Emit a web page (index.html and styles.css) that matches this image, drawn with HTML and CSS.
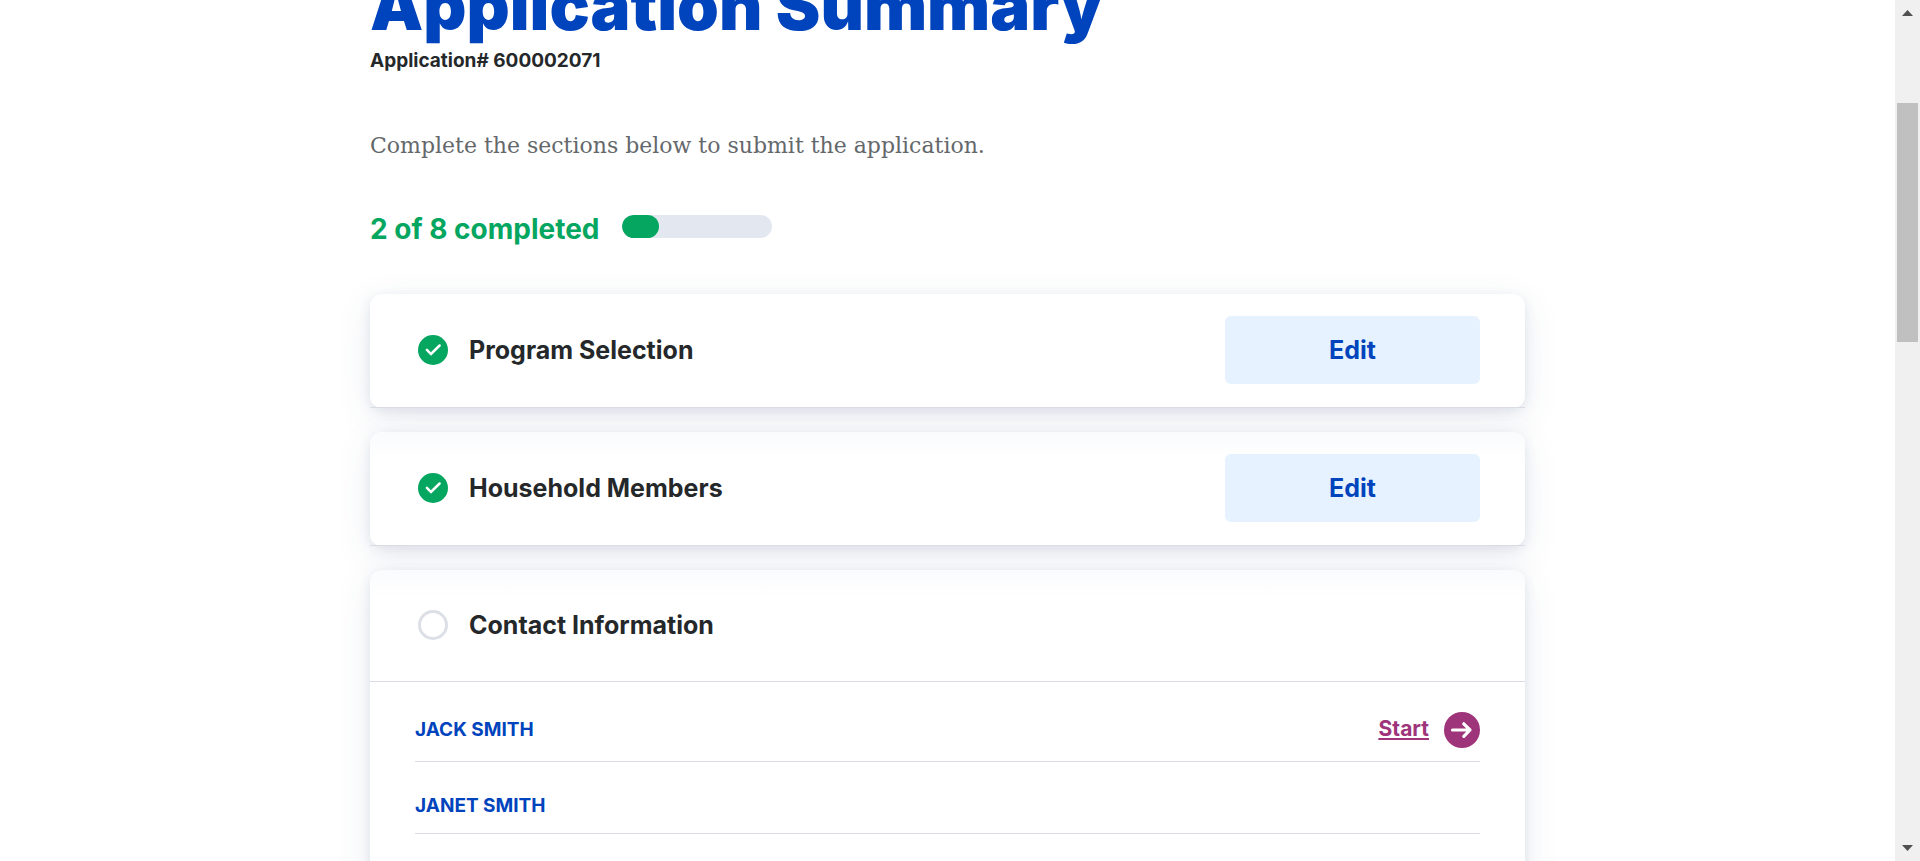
FILE: index.html
```html
<!DOCTYPE html>
<html lang="en">
<head>
<meta charset="utf-8">
<title>Application Summary</title>
<link rel="stylesheet" href="styles.css">
</head>
<body>
<div class="viewport">
  <main class="page">
    <div class="content">
      <h1 class="page-title">Application Summary</h1>
      <p class="app-number">Application# 600002071</p>
      <p class="intro">Complete the sections below to submit the application.</p>
      <div class="progress">
        <span class="progress-label" id="progress-label">2 of 8 completed</span>
        <div class="progress-track" role="progressbar" aria-labelledby="progress-label" aria-valuemin="0" aria-valuemax="8" aria-valuenow="2">
          <div class="progress-fill" style="width: 25%"></div>
        </div>
      </div>
      <div class="sections">
        <section class="card">
          <header class="card-header">
            <svg class="status" viewBox="0 0 30 30" aria-hidden="true"><circle cx="15" cy="15" r="15" fill="#05a660"/><path d="M8.900 14.800l4.100 4.200 8.600-8.500" fill="none" stroke="#fff" stroke-width="2.500" stroke-linecap="round" stroke-linejoin="miter"/></svg>
            <h2 class="card-title">Program Selection</h2>
            <button class="edit-button" type="button">Edit</button>
          </header>
        </section>
        <section class="card">
          <header class="card-header">
            <svg class="status" viewBox="0 0 30 30" aria-hidden="true"><circle cx="15" cy="15" r="15" fill="#05a660"/><path d="M8.900 14.800l4.100 4.200 8.600-8.500" fill="none" stroke="#fff" stroke-width="2.500" stroke-linecap="round" stroke-linejoin="miter"/></svg>
            <h2 class="card-title">Household Members</h2>
            <button class="edit-button" type="button">Edit</button>
          </header>
        </section>
        <section class="card">
          <header class="card-header card-header-plain">
            <svg class="status" viewBox="0 0 30 30" aria-hidden="true"><circle cx="15" cy="15" r="13.500" fill="#fff" stroke="#dcdfe6" stroke-width="3"/></svg>
            <h2 class="card-title">Contact Information</h2>
          </header>
          <ul class="people">
            <li class="person">
              <span class="person-name">JACK SMITH</span>
              <a class="start-link" href="#start">
                <span class="start-text">Start</span>
                <svg class="start-icon" viewBox="0 0 36 36" aria-hidden="true"><circle cx="18" cy="18" r="18" fill="#9e3479"/><path d="M8.500 18h17.500M19.800 11.800l6.200 6.200-6.200 6.400" fill="none" stroke="#fff" stroke-width="3.200" stroke-linecap="round" stroke-linejoin="round"/></svg>
              </a>
            </li>
            <li class="person">
              <span class="person-name">JANET SMITH</span>
            </li>
          </ul>
        </section>
      </div>
    </div>
  </main>
  <div class="scrollbar" aria-hidden="true">
    <svg class="scroll-arrow" viewBox="0 0 11 6"><path d="M0 6L5.500 0 11 6z" fill="#505050"/></svg>
    <div class="scroll-track"><div class="scroll-thumb"></div></div>
    <svg class="scroll-arrow" viewBox="0 0 11 6"><path d="M0 0L5.500 6 11 0z" fill="#505050"/></svg>
  </div>
</div>
</body>
</html>
```
FILE: styles.css
```css
* {
  box-sizing: border-box;
}

body {
  margin: 0;
  background: #fff;
  color: #25282a;
  font-family: Inter, "Open Sans", sans-serif;
}

h1, h2, p, ul {
  margin: 0;
  padding: 0;
}

.viewport {
  display: flex;
  height: 100vh;
  overflow: hidden;
}

.page {
  flex: 1;
  overflow: hidden;
}

.content {
  max-width: 1155px;
  margin: 0 auto;
}

/* The page is scrolled part of the way past its heading. */
.page-title {
  margin-top: -34px;
  color: #0044bd;
  font-size: 67px;
  font-weight: 900;
  line-height: 80px;
}

.app-number {
  font-size: 19px;
  font-weight: 700;
  line-height: 30px;
}

.intro {
  margin-top: 52px;
  color: #64686b;
  font-family: "DejaVu Serif", serif;
  font-size: 22px;
  line-height: 36px;
}

.progress {
  display: flex;
  align-items: flex-start;
  gap: 22px;
  margin-top: 45px;
}

.progress-label {
  color: #05a660;
  font-size: 28px;
  font-weight: 700;
  line-height: 40px;
}

.progress-track {
  width: 150px;
  height: 23px;
  margin-top: 6px;
  border-radius: 12px;
  background: #e3e7ef;
  overflow: hidden;
}

.progress-fill {
  height: 100%;
  border-radius: 12px;
  background: #05a660;
}

.sections {
  display: flex;
  flex-direction: column;
  gap: 24px;
  margin-top: 45px;
}

.card {
  border-radius: 12px;
  background: linear-gradient(#fafbfd, #fff 28px);
  box-shadow: 0 10px 36px rgba(60, 80, 130, 0.1), 0 3px 12px rgba(60, 90, 120, 0.12);
}

.card:first-child {
  background: #fff;
}

.card-header {
  display: flex;
  align-items: center;
  padding: 22px 45px 23px 48px;
  border-bottom: 1px solid #d9dce5;
}

.card-header-plain {
  padding-top: 37px;
  padding-bottom: 38px;
}

.status {
  width: 30px;
  height: 30px;
  margin-right: 21px;
}

.card-title {
  flex: 1;
  font-size: 25px;
  font-weight: 700;
  line-height: 36px;
}

.edit-button {
  width: 255px;
  height: 68px;
  border: 0;
  border-radius: 6px;
  background: #e6f2ff;
  color: #0044bd;
  font: inherit;
  font-size: 25px;
  font-weight: 700;
}

.people {
  padding: 0 45px 60px;
  list-style: none;
}

.person {
  display: flex;
  align-items: center;
  justify-content: space-between;
  padding: 30px 0 13px;
  border-bottom: 1px solid #d9dce5;
}

.person-name {
  color: #0044bd;
  font-size: 19px;
  font-weight: 700;
  line-height: 28px;
}

.start-link {
  display: flex;
  align-items: center;
  gap: 15px;
  color: #9e3479;
  font-size: 21px;
  font-weight: 700;
}

.start-text {
  padding-bottom: 4px;
  text-decoration: underline;
}

.start-icon {
  width: 36px;
  height: 36px;
}

.scrollbar {
  display: flex;
  flex-direction: column;
  align-items: center;
  width: 25px;
  padding: 10px 2px;
  background: #f0f0f0;
}

.scroll-arrow {
  width: 11px;
  height: 6px;
}

.scroll-track {
  flex: 1;
  width: 100%;
  padding-top: 87px;
}

.scroll-thumb {
  height: 239px;
  background: #c0c0c0;
}
```
